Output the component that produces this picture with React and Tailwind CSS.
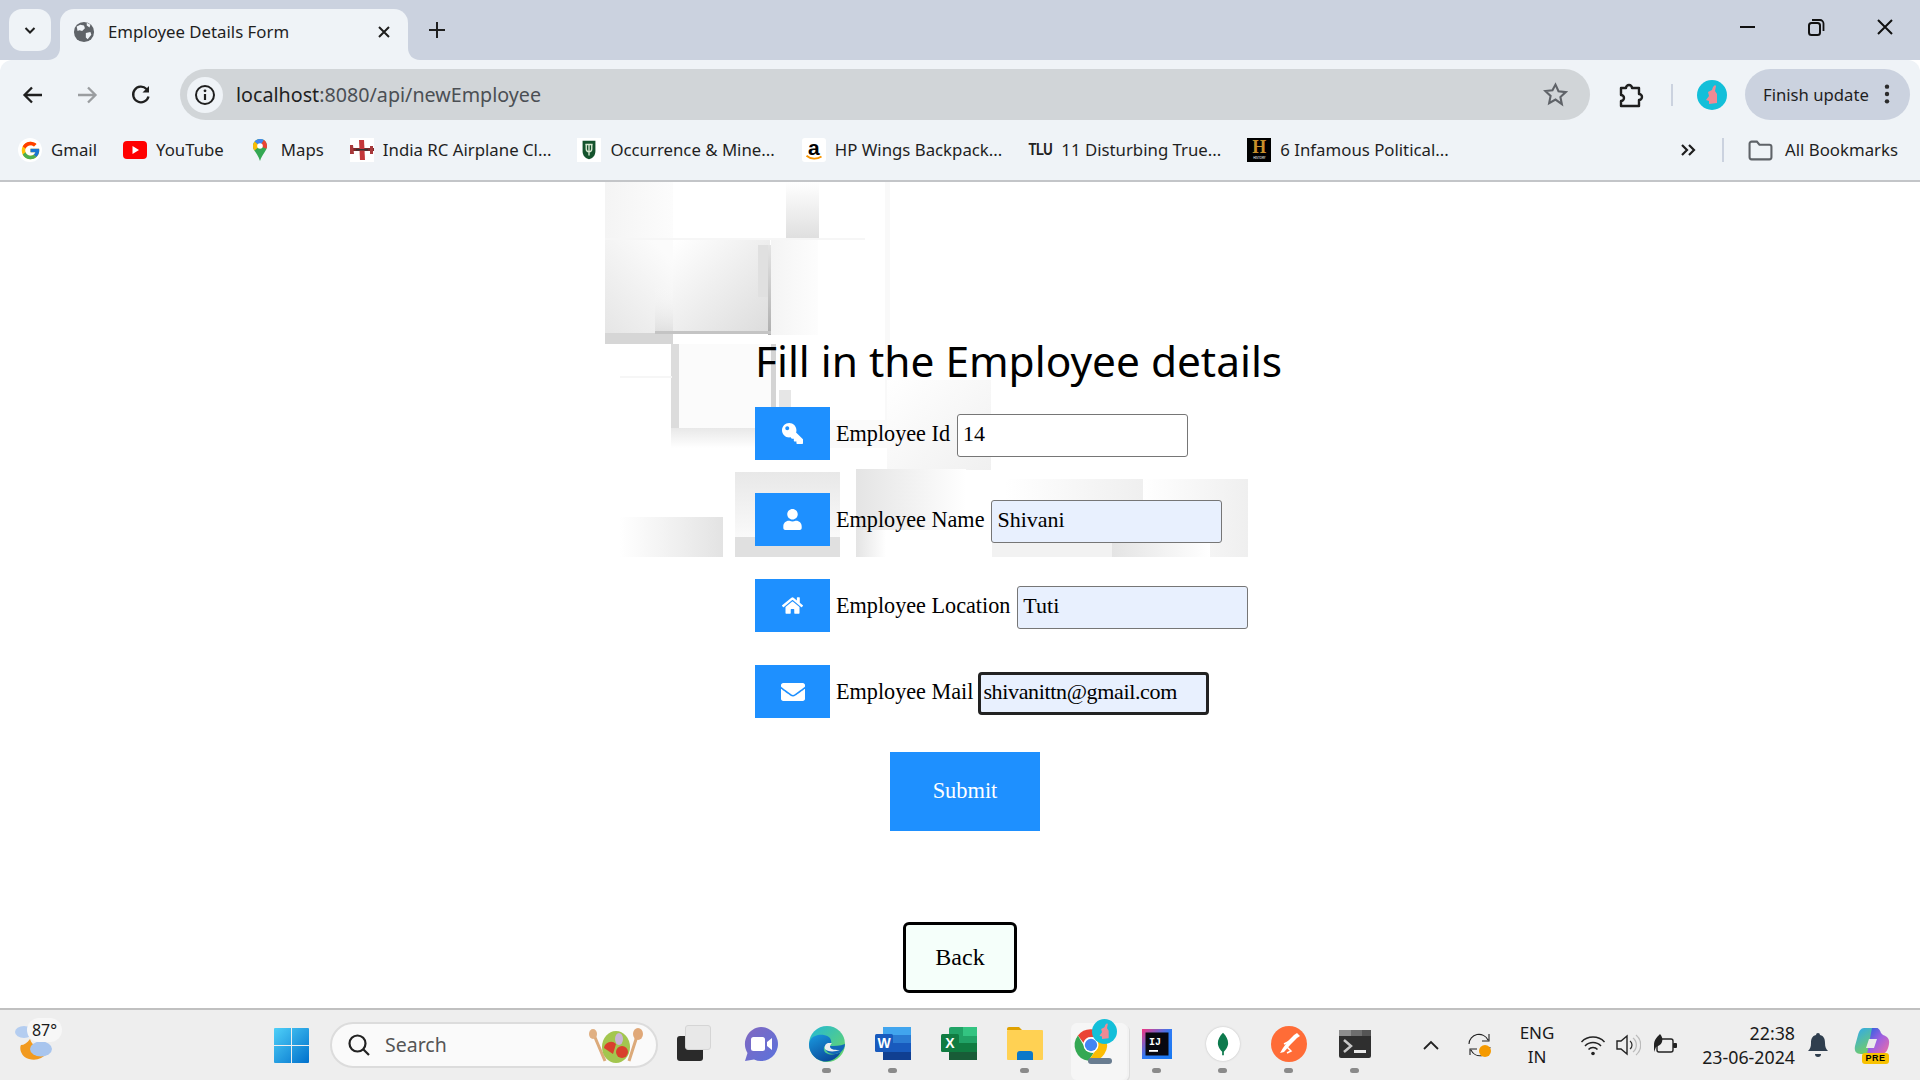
import React from "react";
import { FaKey, FaUser, FaHome, FaEnvelope } from "react-icons/fa";
import { FcGoogle } from "react-icons/fc";

const UI = "font-['Noto_Sans',sans-serif]";
const SERIF = "font-['Liberation_Serif',serif]";

function Bookmark({ icon, text, className = "" }) {
  return (
    <div className={`flex items-center gap-[9px] shrink-0 ${className}`}>
      <div className="w-[24px] h-[24px] flex items-center justify-center shrink-0">{icon}</div>
      <span className="text-[16.800px] text-[#1f1f1f] whitespace-nowrap">{text}</span>
    </div>
  );
}

function MapsPin() {
  return (
    <svg viewBox="0 0 24 24" className="w-[24px] h-[24px]">
      <path d="M12 1C7.4 1 5 4.6 5 8c0 5 5 8 7 15 2-7 7-10 7-15 0-3.400-2.400-7-7-7z" fill="#34a853" />
      <path d="M5 8c0-1.700.6-3.300 1.700-4.600L12 8l-5.600 4.500C5.500 11.200 5 9.800 5 8z" fill="#fbbc04" />
      <path d="M6.700 3.400C8 1.900 9.800 1 12 1c1.500 0 2.800.4 3.900 1.100L12 8z" fill="#4285f4" />
      <path d="M15.900 2.100C17.800 3.300 19 5.600 19 8c0 1-.2 1.900-.6 2.800L12 8z" fill="#ea4335" />
      <circle cx="12" cy="8" r="2.800" fill="#fff" />
    </svg>
  );
}

function Plane() {
  return (
    <div className="w-[24px] h-[24px] bg-white flex items-center justify-center">
      <svg viewBox="0 0 24 24" className="w-[24px] h-[24px]">
        <path d="M0 10h24v3H0z" fill="#7a2a2a" />
        <path d="M9 2l5 0 1 20-5 0z" fill="#c4373a" />
        <path d="M0 7l3 0 1 9-4 0zM20 8h3v8h-3z" fill="#a8383a" />
        <path d="M6 11h12v1.500H6z" fill="#333" />
      </svg>
    </div>
  );
}

function Shield() {
  return (
    <div className="w-[24px] h-[24px] bg-white flex items-center justify-center">
      <svg viewBox="0 0 24 24" className="w-[22px] h-[24px]">
        <path d="M5 2h14v11c0 5-3 8-7 9-4-1-7-4-7-9z" fill="#14532d" />
        <path d="M8 6h8M9 6v5c0 2 1.500 3 3 3s3-1 3-3V6M12 6v12" stroke="#d7e8d0" strokeWidth="1.500" fill="none" />
      </svg>
    </div>
  );
}

function Amazon() {
  return (
    <div className="w-[24px] h-[24px] bg-white rounded-[3px] flex flex-col items-center relative">
      <span className="font-['Liberation_Sans',sans-serif] font-bold text-[21px] leading-[20px] text-black">a</span>
      <svg viewBox="0 0 24 8" className="absolute left-[3px] bottom-[1px] w-[18px] h-[6px]">
        <path d="M2 1c6 5 14 5 20 1" stroke="#f79400" strokeWidth="2.500" fill="none" />
      </svg>
    </div>
  );
}

function History() {
  return (
    <div className="w-[24px] h-[24px] bg-black flex flex-col items-center justify-start">
      <span className="font-['Liberation_Serif',serif] font-bold text-[18px] leading-[19px] text-[#c8902a]">H</span>
      <span className="text-[3px] leading-[3px] text-white">HISTORY</span>
    </div>
  );
}

function Background() {
  const r = (x, y, w, h, f, k) => <rect key={k} x={x - 605} y={y - 182} width={w} height={h} fill={f} />;
  return (
    <svg viewBox="0 0 643 375" className="absolute left-[605px] top-0 w-[643px] h-[375px]">
      <defs>
        <linearGradient id="fr" x1="0" x2="1" y1="0" y2="0"><stop offset="0" stopColor="#fff" /><stop offset="1" stopColor="#e3e3e3" /></linearGradient>
        <linearGradient id="frs" x1="0" x2="1" y1="0" y2="0"><stop offset="0" stopColor="#fff" /><stop offset="1" stopColor="#efefef" /></linearGradient>
        <linearGradient id="fl" x1="0" x2="1" y1="0" y2="0"><stop offset="0" stopColor="#e4e4e4" /><stop offset="1" stopColor="#fff" /></linearGradient>
        <linearGradient id="fb" x1="0" x2="0" y1="0" y2="1"><stop offset="0" stopColor="#fff" /><stop offset="1" stopColor="#dedede" /></linearGradient>
        <linearGradient id="fbs" x1="0" x2="0" y1="0" y2="1"><stop offset="0" stopColor="#fff" stopOpacity="0" /><stop offset="1" stopColor="#d8d8d8" stopOpacity="0.700" /></linearGradient>
        <linearGradient id="ft" x1="0" x2="0" y1="0" y2="1"><stop offset="0" stopColor="#e8e8e8" /><stop offset="1" stopColor="#fff" /></linearGradient>
        <linearGradient id="fd" x1="0" x2="1" y1="0" y2="1"><stop offset="0" stopColor="#fff" /><stop offset="1" stopColor="#dcdcdc" /></linearGradient>
        <linearGradient id="fa" x1="0" x2="0.700" y1="1" y2="0"><stop offset="0" stopColor="#e4e4e4" /><stop offset="1" stopColor="#fbfbfb" /></linearGradient>
        <linearGradient id="vl" x1="0" x2="0" y1="0" y2="1"><stop offset="0" stopColor="#e4e4e4" /><stop offset="1" stopColor="#aeaeae" /></linearGradient>
        <linearGradient id="g1" x1="0" x2="1" y1="0" y2="0"><stop offset="0" stopColor="#f4f4f4" /><stop offset="1" stopColor="#fcfcfc" /></linearGradient>
        <linearGradient id="g2" x1="0" x2="1" y1="0" y2="1"><stop offset="0" stopColor="#fff" /><stop offset="1" stopColor="#f0f0f0" /></linearGradient>
        <linearGradient id="g3" x1="0" x2="1" y1="0" y2="0"><stop offset="0" stopColor="#f4f4f4" /><stop offset="1" stopColor="#fdfdfd" /></linearGradient>
      </defs>
      {r(605, 182, 68, 58, "url(#g1)", 1)}
      {r(786, 182, 33, 58, "url(#fb)", 2)}
      {r(605, 240, 68, 104, "url(#fa)", 3)}
      {r(605, 333, 68, 11, "#d6d6d6", 4)}
      {r(673, 240, 97, 93, "url(#fd)", 5)}
      {r(655, 285, 18, 48, "url(#fbs)", 6)}
      {r(771, 240, 47, 95, "url(#g3)", 10)}
      {r(758, 245, 10, 52, "#e0e0e0", 7)}
      {r(768, 245, 3, 90, "url(#vl)", 8)}
      {r(655, 331, 116, 3, "#c4c4c4", 9)}
      {r(605, 238, 260, 2, "#f6f6f6", 11)}
      {r(671, 344, 8, 104, "#dcdcdc", 12)}
      {r(679, 344, 92, 84, "#fbfbfb", 13)}
      {r(671, 428, 100, 20, "url(#ft)", 14)}
      {r(771, 344, 5, 70, "#d4d4d4", 15)}
      {r(779, 390, 12, 50, "#e6e6e6", 16)}
      {r(620, 376, 52, 2, "#f6f6f6", 17)}
      {r(885, 182, 5, 265, "#f9f9f9", 18)}
      {r(887, 380, 104, 90, "url(#g2)", 19)}
      {r(790, 420, 97, 28, "#fafafa", 20)}
      {r(735, 472, 105, 85, "url(#ft)", 21)}
      {r(735, 537, 105, 20, "#e0e0e0", 22)}
      {r(620, 517, 103, 40, "url(#fr)", 23)}
      {r(856, 469, 110, 61, "url(#fl)", 24)}
      {r(856, 530, 30, 27, "url(#fl)", 26)}
      {r(1005, 479, 138, 78, "url(#frs)", 27)}
      {r(1143, 479, 105, 78, "url(#frs)", 28)}
      {r(992, 540, 120, 17, "#f2f2f2", 29)}
      {r(1112, 540, 98, 17, "url(#fl)", 30)}
    </svg>
  );
}

function Row({ icon, label, value, filled, focused }) {
  return (
    <div className="flex items-center h-[53px]">
      <div className="w-[75px] h-[53px] bg-[#1e90ff] text-white flex items-center justify-center text-[21px] shrink-0">{icon}</div>
      <label className={`${SERIF} text-[22.200px] text-black ml-[6px] mt-[2px] ${focused ? "mr-[5px]" : "mr-[7px]"} whitespace-nowrap leading-none`}>{label}</label>
      <input
        readOnly
        value={value}
        className={`${SERIF} w-[231px] h-[43px] mt-[3px] pb-[2px] text-[22px] text-black outline-none ${
          focused ? "border-[3px] border-[#222] rounded-[4px] px-[2px] tracking-[-0.35px]" : "border border-[#767676] rounded-[3px] px-[5px]"
        } ${filled ? "bg-[#e8f0fe]" : "bg-white"}`}
      />
    </div>
  );
}

function Chrome({ size = 50 }) {
  return (
    <svg viewBox="0 0 48 48" style={{ width: size, height: size }}>
      <path d="M24 4a20 20 0 0 1 17.300 10H24a10 10 0 0 0-9.500 7L7.500 12A20 20 0 0 1 24 4z" fill="#ea4335" />
      <path d="M7.500 12l9 15.500a10 10 0 0 0 11 6.300L20.800 44A20 20 0 0 1 7.500 12z" fill="#34a853" />
      <path d="M41.300 14A20 20 0 0 1 20.800 44l9-13a10 10 0 0 0 .5-14z" fill="#fbbc04" />
      <circle cx="24" cy="24" r="9.500" fill="#fff" />
      <circle cx="24" cy="24" r="7.800" fill="#4285f4" />
    </svg>
  );
}

function Avatar({ size }) {
  return (
    <svg viewBox="0 0 30 30" style={{ width: size, height: size }}>
      <circle cx="15" cy="15" r="15" fill="#13bfd9" />
      <path d="M18 5l1 1-1 5 2 3 0 9-8 1 0-3-3-1 3-4-1-4 4-2 1-3z" fill="#f08a94" />
    </svg>
  );
}

function Slot({ children, dot, className = "" }) {
  return (
    <div className={`w-[66px] h-[66px] relative flex items-center justify-center shrink-0 ${className}`}>
      <div className="-mt-[2px] flex items-center justify-center relative">{children}</div>
      {dot && <div className="absolute bottom-[5px] left-[28px] w-[9px] h-[5px] rounded-full bg-[#8a8a8a]" />}
    </div>
  );
}

export default function App() {
  return (
    <div className={`${UI} w-[1920px] h-[1080px] flex flex-col overflow-hidden bg-white`}>
      {/* Tab strip */}
      <div className="h-[60px] bg-[#cbd2df] flex items-end pl-[9px] shrink-0">
        <div className="self-start mt-[9px] w-[42px] h-[42px] rounded-[13px] bg-[#eff3f7] flex items-center justify-center">
          <svg viewBox="0 0 16 16" className="w-[16px] h-[16px]"><path d="M3.500 6l4.500 4.500L12.500 6" stroke="#1f1f1f" strokeWidth="2" fill="none" /></svg>
        </div>
        <div className="relative ml-[9px] w-[348px] h-[51px] bg-[#eff3f7] rounded-t-[14px] flex items-center pl-[13px] pb-[5px]">
          <svg viewBox="0 0 12 12" className="absolute -left-[12px] bottom-0 w-[12px] h-[12px]"><path d="M12 0v12H0c7 0 12-5 12-12z" fill="#eff3f7" /></svg>
          <svg viewBox="0 0 12 12" className="absolute -right-[12px] bottom-0 w-[12px] h-[12px]"><path d="M0 0v12h12C5 12 0 7 0 0z" fill="#eff3f7" /></svg>
          <svg viewBox="0 0 24 24" className="w-[22px] h-[22px] shrink-0">
            <circle cx="12" cy="12" r="11" fill="#5f6368" />
            <path d="M4 6l4-2 4 1 1 3-3 3-3-1-2 1zM14 13l5-1 1 3-4 5-2-2zM15 2l4 2-1 3-3-2z" fill="#eff3f7" />
          </svg>
          <span className="ml-[13px] text-[16.800px] text-[#1f1f1f] whitespace-nowrap">Employee Details Form</span>
          <svg viewBox="0 0 14 14" className="absolute right-[17px] top-[16px] w-[14px] h-[14px]"><path d="M2 2l10 10M12 2L2 12" stroke="#1f1f1f" strokeWidth="2" /></svg>
        </div>
        <svg viewBox="0 0 18 18" className="self-start mt-[21px] ml-[20px] w-[18px] h-[18px]"><path d="M9 1v16M1 9h16" stroke="#1f1f1f" strokeWidth="2" /></svg>
        <div className="ml-auto self-start flex items-center mt-[18px] pr-[26px]">
          <svg viewBox="0 0 18 18" className="w-[18px] h-[18px]"><path d="M1 9h15" stroke="#111" strokeWidth="2" /></svg>
          <svg viewBox="0 0 18 18" className="w-[18px] h-[18px] ml-[50px]"><rect x="2" y="5" width="11" height="12" rx="2.500" stroke="#111" strokeWidth="2" fill="none" /><path d="M5 2h8a3.500 3.500 0 0 1 3.500 3.500V13" stroke="#111" strokeWidth="1.800" fill="none" /></svg>
          <svg viewBox="0 0 18 18" className="w-[18px] h-[18px] ml-[51px]"><path d="M2 2l14 14M16 2L2 16" stroke="#111" strokeWidth="2" /></svg>
        </div>
      </div>

      {/* Toolbar */}
      <div className="h-[60px] bg-[#eff3f7] rounded-t-[12px] flex items-end shrink-0 pl-[22px] relative">
        <div className="flex items-center h-[51px] w-full">
          <svg viewBox="0 0 22 22" className="w-[22px] h-[22px]"><path d="M20 11H3M10 3.500L2.500 11l7.500 7.500" stroke="#1f1f1f" strokeWidth="2.300" fill="none" /></svg>
          <svg viewBox="0 0 22 22" className="w-[22px] h-[22px] ml-[32px]"><path d="M2 11h17M12 3.500l7.500 7.500-7.500 7.500" stroke="#9a9da0" strokeWidth="2.300" fill="none" /></svg>
          <svg viewBox="0 0 22 22" className="w-[22px] h-[22px] ml-[32px]"><path d="M18.500 12.500A7.800 7.800 0 1 1 16.500 5l1.500 1.500" stroke="#1f1f1f" strokeWidth="2.300" fill="none" /><path d="M19 2v6.500h-6.500z" fill="#1f1f1f" /></svg>
          <div className="ml-[28px] w-[1410px] h-[51px] rounded-full bg-[#d1d5d8] flex items-center pl-[7px] relative">
            <div className="w-[36px] h-[36px] rounded-full bg-[#eff3f7] flex items-center justify-center">
              <svg viewBox="0 0 22 22" className="w-[22px] h-[22px]"><circle cx="11" cy="11" r="9" stroke="#1f1f1f" strokeWidth="2" fill="none" /><path d="M11 10v6" stroke="#1f1f1f" strokeWidth="2.200" /><circle cx="11" cy="6.800" r="1.400" fill="#1f1f1f" /></svg>
            </div>
            <span className="ml-[13px] text-[19.700px] text-[#1f1f1f]">localhost<span className="text-[#4b4f54]">:8080/api/newEmployee</span></span>
            <svg viewBox="0 0 24 24" className="absolute right-[22px] top-[13px] w-[25px] h-[25px]"><path d="M12 2.500l2.900 6.400 6.900.8-5.100 4.700 1.400 6.900L12 16.900l-6.100 3.400 1.400-6.900-5.100-4.700 6.900-.8z" stroke="#5f6368" strokeWidth="2" fill="none" /></svg>
          </div>
          <svg viewBox="0 0 26 26" className="w-[26px] h-[26px] ml-[28px]"><path d="M3 6h5a3 3 0 0 1 6 0h7v6a3 3 0 0 1 0 6v6H3v-5a2.800 2.800 0 0 0 0-6z" stroke="#1f1f1f" strokeWidth="2.400" fill="none" strokeLinejoin="round" /></svg>
          <div className="ml-[27px] w-[2px] h-[22px] bg-[#cbd2df]" />
          <div className="ml-[24px]"><Avatar size={30} /></div>
          <div className="ml-[18px] w-[165px] h-[51px] rounded-full bg-[#cbd2df] flex items-center pl-[18px] relative">
            <span className="text-[16.700px] text-[#1f1f1f] whitespace-nowrap">Finish update</span>
            <svg viewBox="0 0 6 24" className="absolute right-[20px] top-[14px] w-[6px] h-[22px]"><circle cx="3" cy="4" r="2.400" fill="#2b2b2b" /><circle cx="3" cy="12" r="2.400" fill="#2b2b2b" /><circle cx="3" cy="20" r="2.400" fill="#2b2b2b" /></svg>
          </div>
        </div>
      </div>

      {/* Bookmarks */}
      <div className="h-[62px] bg-[#eff3f7] border-b-2 border-[#c3c5c8] flex items-center pl-[18px] shrink-0 gap-[26px] relative">
        <Bookmark icon={<div className="w-[24px] h-[24px] rounded-full bg-white flex items-center justify-center"><FcGoogle size={21} /></div>} text="Gmail" />
        <Bookmark icon={<svg viewBox="0 0 24 18" className="w-[24px] h-[18px]"><rect width="24" height="18" rx="4" fill="#f00" /><path d="M9.500 5v8l6.500-4z" fill="#fff" /></svg>} text="YouTube" />
        <Bookmark className="-ml-[2px]" icon={<MapsPin />} text="Maps" />
        <Bookmark icon={<Plane />} text="India RC Airplane Cl..." />
        <Bookmark icon={<Shield />} text="Occurrence & Mine..." />
        <Bookmark className="ml-[1px]" icon={<Amazon />} text="HP Wings Backpack..." />
        <Bookmark icon={<span className="font-['Liberation_Sans',sans-serif] font-bold text-[13px] tracking-[-0.5px] text-[#222] scale-y-125">TLU</span>} text="11 Disturbing True..." />
        <Bookmark icon={<History />} text="6 Infamous Political..." />
        <div className="ml-auto flex items-center pr-[22px]">
          <svg viewBox="0 0 16 16" className="w-[16px] h-[16px]"><path d="M2 3l5 5-5 5M9 3l5 5-5 5" stroke="#1f1f1f" strokeWidth="2.200" fill="none" /></svg>
          <div className="ml-[26px] w-[2px] h-[24px] bg-[#cbd2df]" />
          <svg viewBox="0 0 24 20" className="ml-[24px] w-[25px] h-[21px]"><path d="M1.500 3.500a2 2 0 0 1 2-2h5l2.500 3h9.500a2 2 0 0 1 2 2v10a2 2 0 0 1-2 2h-17a2 2 0 0 1-2-2z" stroke="#5f6368" strokeWidth="2" fill="none" /></svg>
          <span className="ml-[12px] text-[16.800px] text-[#1f1f1f] whitespace-nowrap">All Bookmarks</span>
        </div>
      </div>

      {/* Page */}
      <main className="relative flex-1 bg-white pl-[755px] pt-[151px]">
        <Background />
        <div className="relative flex flex-col items-start">
          <h1 className="text-[42.400px] leading-[56px] font-normal text-black font-['Noto_Sans',sans-serif] whitespace-nowrap h-[74px]">Fill in the Employee details</h1>
          <div className="flex flex-col gap-[33px]">
            <Row icon={<FaKey className="-scale-x-100" />} label="Employee Id" value="14" />
            <Row icon={<FaUser />} label="Employee Name" value="Shivani" filled />
            <Row icon={<FaHome />} label="Employee Location" value="Tuti" filled />
            <Row icon={<FaEnvelope className="text-[24px]" />} label="Employee Mail" value="shivanittn@gmail.com" filled focused />
          </div>
          <button className={`${SERIF} ml-[135px] mt-[34px] w-[150px] h-[79px] pb-[2px] bg-[#1e90ff] text-white text-[22.400px]`}>Submit</button>
          <button className={`${SERIF} ml-[148px] mt-[91px] w-[114px] h-[71px] pb-[2px] bg-[#f5fffa] border-[3px] border-black rounded-[6px] text-black text-[24px]`}>Back</button>
        </div>
      </main>

      {/* Taskbar */}
      <footer className="h-[72px] bg-[#eeeeee] border-t-2 border-[#c0c0c0] flex items-center shrink-0 relative">
        <div className="self-start mt-[8px] w-[60px] h-[44px] ml-[14px] relative shrink-0">
          <svg viewBox="0 0 40 36" className="absolute left-0 top-[7px] w-[40px] h-[36px]">
            <path d="M16 14a16 14 0 0 0 19 10 16 16 0 0 1-20 10C7 32 5 23 7 20c3 0 6-2 9-6z" fill="#f29a1f" />
            <ellipse cx="10" cy="7" rx="9" ry="6" fill="#b4cdf0" />
            <ellipse cx="27" cy="24" rx="11" ry="7.500" fill="#a8c5ee" />
          </svg>
          <div className="absolute left-[13px] top-0 w-[35px] h-[24px] rounded-full bg-[#f7f7f7] flex items-center justify-center text-[16px] text-[#1a1a1a]">87°</div>
        </div>
        <div className="ml-[200px] shrink-0">
          <svg viewBox="0 0 35 35" className="w-[35px] h-[35px]">
            <defs><linearGradient id="win" x1="0" y1="0" x2="1" y2="1"><stop offset="0" stopColor="#4fd0f8" /><stop offset="1" stopColor="#0070cc" /></linearGradient></defs>
            <path d="M0 1a1 1 0 0 1 1-1h16v17H0zM18 0h16a1 1 0 0 1 1 1v16H18zM0 18h17v17H1a1 1 0 0 1-1-1zM18 18h17v16a1 1 0 0 1-1 1H18z" fill="url(#win)" />
          </svg>
        </div>
        <div className="ml-[21px] w-[328px] h-[46px] rounded-full bg-[#fafafa] border-2 border-[#dcdcdc] flex items-center pl-[15px] relative shrink-0">
          <svg viewBox="0 0 24 24" className="w-[24px] h-[24px]"><circle cx="10.500" cy="10.500" r="8" stroke="#222" strokeWidth="2.200" fill="none" /><path d="M16 16l6 6" stroke="#222" strokeWidth="2.200" /></svg>
          <span className="ml-[14px] text-[19.500px] text-[#555]">Search</span>
          <svg viewBox="0 0 60 36" className="absolute right-[10px] top-[4px] w-[60px] h-[36px]">
            <path d="M8 7l11 26M52 5L43 33" stroke="#dcaa7a" strokeWidth="3" />
            <ellipse cx="7" cy="6" rx="4" ry="5" fill="#e0b083" />
            <ellipse cx="52" cy="6" rx="5" ry="6" fill="#e0a878" />
            <ellipse cx="30" cy="19" rx="14" ry="16" fill="#a3c64f" />
            <path d="M18 20a7 7 0 0 1 12-4l-3 10z" fill="#d8402c" />
            <circle cx="36" cy="24" r="6" fill="#d8402c" />
            <ellipse cx="33" cy="11" rx="4" ry="6" fill="#c9b4d8" />
          </svg>
        </div>
        <Slot className="ml-[4px]">
          <div className="relative w-[34px] h-[36px] mr-[3px] -mt-[2px]">
            <div className="absolute left-0 bottom-0 w-[26px] h-[25px] rounded-[3px] bg-[#2a2a2a]" />
            <div className="absolute right-0 top-0 w-[26px] h-[25px] rounded-[3px] bg-[#e8e8e8] border border-[#d5d5d5]" />
          </div>
        </Slot>
        <Slot>
          <svg viewBox="0 0 36 36" className="w-[36px] h-[36px]">
            <defs><linearGradient id="meet" x1="0" y1="0" x2="1" y2="1"><stop offset="0" stopColor="#8268c0" /><stop offset="1" stopColor="#5a72dc" /></linearGradient></defs>
            <path d="M18 1a17 17 0 1 1-7 32.500L2 35l2.500-8A17 17 0 0 1 18 1z" fill="url(#meet)" />
            <rect x="8" y="11" width="14" height="14" rx="2.500" fill="#fff" /><path d="M24 16l5-4v12l-5-4z" fill="#fff" />
          </svg>
        </Slot>
        <Slot dot>
          <svg viewBox="0 0 36 36" className="w-[36px] h-[36px]">
            <defs>
              <linearGradient id="edge" x1="0" y1="0" x2="1" y2="1"><stop offset="0" stopColor="#22b8d8" /><stop offset="1" stopColor="#6ed860" /></linearGradient>
              <linearGradient id="edge2" x1="0" y1="0" x2="0.600" y2="1"><stop offset="0" stopColor="#1a9ae0" /><stop offset="1" stopColor="#0a4a9a" /></linearGradient>
            </defs>
            <circle cx="18" cy="18" r="18" fill="url(#edge)" />
            <path d="M0 18C1 10 9 8 15 9c6 1 8 5 7 9-4 0-8 2-7 6 1 5 10 6 17 2-4 7-12 11-19 9C5 33 0 26 0 18z" fill="url(#edge2)" />
            <path d="M21 20c4 0 10 0 15-2 0 3-2 6-4 8-5 3-13 3-15-2-1-2 1-4 4-4z" fill="#1268b8" />
            <path d="M19 17c-3 1-4 4-3 6 2 3 10 3 15 1-4 0-9 0-10-3 0-2 1-3 2-4z" fill="#eeeeee" />
          </svg>
        </Slot>
        <Slot dot>
          <svg viewBox="0 0 36 36" className="w-[36px] h-[36px]">
            <rect x="8" y="1" width="28" height="33" rx="2" fill="#2b7cd3" />
            <rect x="8" y="1" width="28" height="8" fill="#41a5ee" /><rect x="8" y="17" width="28" height="9" fill="#185abd" /><rect x="8" y="26" width="28" height="8" fill="#103f91" />
            <rect x="0" y="8" width="18" height="18" rx="1.500" fill="#185abd" />
            <text x="9" y="22" textAnchor="middle" fontSize="14" fontWeight="700" fill="#fff" fontFamily="Liberation Sans">W</text>
          </svg>
        </Slot>
        <Slot>
          <svg viewBox="0 0 36 36" className="w-[36px] h-[36px]">
            <rect x="8" y="1" width="28" height="33" rx="2" fill="#21a366" />
            <rect x="22" y="1" width="14" height="9" fill="#33c481" /><rect x="8" y="17" width="28" height="9" fill="#107c41" /><rect x="8" y="26" width="28" height="8" fill="#185c37" />
            <rect x="0" y="8" width="18" height="18" rx="1.500" fill="#107c41" />
            <text x="9" y="22" textAnchor="middle" fontSize="14" fontWeight="700" fill="#fff" fontFamily="Liberation Sans">X</text>
          </svg>
        </Slot>
        <Slot dot>
          <svg viewBox="0 0 36 34" className="w-[36px] h-[34px]">
            <path d="M0 2a2 2 0 0 1 2-2h10l3 3h-15z" fill="#e0a100" /><rect x="0" y="3" width="36" height="30" rx="1" fill="#ffd153" />
            <path d="M10 33v-6a3 3 0 0 1 3-3h10a3 3 0 0 1 3 3v6z" fill="#0a78c9" />
          </svg>
        </Slot>
        <Slot>
          <div className="absolute left-[4px] top-[4px] w-[56px] h-[57px] rounded-[6px] bg-[#f6f6f6] shadow-[2px_1px_0_#f2f2f2,3px_2px_0_#dddddd]" />
          <div className="relative w-[48px] h-[50px]">
            <div className="absolute left-[5px] top-[7px]"><Chrome size={38} /></div>
            <div className="absolute left-[25px] top-0"><Avatar size={25} /></div>
          </div>
          <div className="absolute bottom-[5px] left-[21px] w-[24px] h-[6px] rounded-full bg-[#687c90]" />
        </Slot>
        <Slot dot>
          <svg viewBox="0 0 30 30" className="w-[30px] h-[30px]">
            <defs><linearGradient id="ij" x1="0" y1="0" x2="1" y2="1"><stop offset="0" stopColor="#f6337e" /><stop offset="0.500" stopColor="#2f7bf5" /><stop offset="1" stopColor="#1678f0" /></linearGradient></defs>
            <rect width="30" height="30" fill="url(#ij)" /><rect x="3.500" y="3.500" width="23" height="23" fill="#08080f" />
            <text x="7" y="16" fontSize="10" fontWeight="700" fill="#fff" fontFamily="Liberation Mono">IJ</text><rect x="7" y="21" width="9" height="1.800" fill="#fff" />
          </svg>
        </Slot>
        <Slot dot>
          <div className="w-[34px] h-[34px] rounded-full bg-white shadow-[0_0_2px_#bbb] flex items-center justify-center">
            <svg viewBox="0 0 14 28" className="w-[12px] h-[26px]"><path d="M7 1c4 4 6 8 6 12s-3 8-5 10v4H6v-4C4 21 1 17 1 13S3 5 7 1z" fill="#0d7a4d" /></svg>
          </div>
        </Slot>
        <Slot dot>
          <svg viewBox="0 0 36 36" className="w-[36px] h-[36px]">
            <circle cx="18" cy="18" r="18" fill="#ff6c37" />
            <path d="M26 7l3 3-3 2-6 6-7 8-4 1 3-5 5-7 6-6z" fill="#fff" />
            <path d="M16 21l4 4-4 2M19 15l-6 3" stroke="#fff" strokeWidth="1.500" fill="none" />
          </svg>
        </Slot>
        <Slot dot>
          <svg viewBox="0 0 32 28" className="w-[32px] h-[28px]">
            <rect width="32" height="28" rx="2" fill="#2f2f2f" /><rect width="12" height="6" fill="#8d8d8d" /><rect x="12" width="11" height="6" fill="#6e6e6e" /><rect x="23" width="9" height="6" fill="#555" />
            <path d="M5 10l7 6-7 6" stroke="#c8c8c8" strokeWidth="2.500" fill="none" /><rect x="15" y="20" width="12" height="3" fill="#e8e8e8" />
          </svg>
        </Slot>
        <svg viewBox="0 0 18 12" className="ml-[34px] w-[18px] h-[12px] shrink-0"><path d="M2 10l7-7 7 7" stroke="#222" strokeWidth="1.800" fill="none" /></svg>
        <svg viewBox="0 0 26 26" className="ml-[27px] w-[26px] h-[26px] shrink-0">
          <path d="M2 12a10 10 0 0 1 19-4M22 2v7h-7M23 15a10 10 0 0 1-19 3M3 23v-6h7" stroke="#222" strokeWidth="1.100" fill="none" />
          <circle cx="18" cy="19" r="6" fill="#f59a00" />
        </svg>
        <div className="ml-[28px] w-[32px] text-center text-[17px] leading-[24px] text-[#1a1a1a] shrink-0 flex flex-col items-center whitespace-nowrap"><span>ENG</span><span>IN</span></div>
        <svg viewBox="0 0 26 22" className="ml-[27px] w-[26px] h-[22px] shrink-0">
          <path d="M1.500 8a16 16 0 0 1 23 0M5 12a11 11 0 0 1 16 0M8.500 15.500a6 6 0 0 1 9 0" stroke="#222" strokeWidth="1.500" fill="none" /><circle cx="13" cy="19.500" r="1.800" fill="#222" />
        </svg>
        <svg viewBox="0 0 26 24" className="ml-[9px] w-[26px] h-[24px] shrink-0">
          <path d="M2 8h4l6-5v18l-6-5H2z" stroke="#222" strokeWidth="1.400" fill="none" /><path d="M15 8a5 5 0 0 1 0 8" stroke="#333" strokeWidth="1.300" fill="none" /><path d="M18 5a9 9 0 0 1 0 14M21 2a13 13 0 0 1 0 20" stroke="#bbb" strokeWidth="1.300" fill="none" />
        </svg>
        <svg viewBox="0 0 26 24" className="ml-[11px] w-[26px] h-[24px] shrink-0">
          <rect x="5" y="6" width="16" height="13" rx="2" stroke="#222" strokeWidth="1.400" fill="none" /><rect x="21" y="10" width="4" height="5" rx="1" fill="#222" />
          <path d="M2 12c0-5 3-8 6-11 2 2 3 5 2 8-1 3-4 4-6 5l-2 5z" fill="#222" />
        </svg>
        <div className="ml-[7px] w-[110px] text-[17.800px] leading-[24px] text-[#1a1a1a] whitespace-nowrap shrink-0 flex flex-col items-end">
          <span>22:38</span><span>23-06-2024</span>
        </div>
        <svg viewBox="0 0 22 26" className="ml-[12px] w-[22px] h-[26px] shrink-0">
          <path d="M11 1a2 2 0 0 1 2 2c4 1 5 4 5 8 0 4 1 6 3 8H1c2-2 3-4 3-8 0-4 1-7 5-8a2 2 0 0 1 2-2z" fill="#2f3e4e" /><path d="M8 22h6a3 3 0 0 1-6 0z" fill="#2f3e4e" />
        </svg>
        <div className="ml-[25px] relative w-[36px] h-[38px] shrink-0">
          <svg viewBox="0 0 36 30" className="absolute left-0 top-0 w-[36px] h-[30px]">
            <defs>
              <linearGradient id="cop" x1="0" y1="0" x2="0.600" y2="1"><stop offset="0" stopColor="#2ea8f0" /><stop offset="1" stopColor="#7ad05a" /></linearGradient>
              <linearGradient id="cop2" x1="0" y1="0" x2="1" y2="1"><stop offset="0" stopColor="#2060e0" /><stop offset="0.500" stopColor="#a060e0" /><stop offset="1" stopColor="#f070a0" /></linearGradient>
            </defs>
            <path d="M10 2h14L15 28H7c-5 0-7-3-6-8l3-11c1-4 3-7 6-7z" fill="url(#cop)" />
            <path d="M18 2h4c3 0 4 2 5 5l2 2c4 1 7 4 6 9-1 6-3 10-8 10H13z" fill="url(#cop2)" />
            <path d="M15 13h8l-3 9h-8z" fill="#eaeaea" />
          </svg>
          <div className="absolute left-[8px] bottom-0 w-[27px] h-[11px] rounded-[3px] bg-[#f8c100] flex items-center justify-center font-['Liberation_Sans',sans-serif] font-bold text-[9px] tracking-[0.5px] text-black">PRE</div>
        </div>
      </footer>
    </div>
  );
}
